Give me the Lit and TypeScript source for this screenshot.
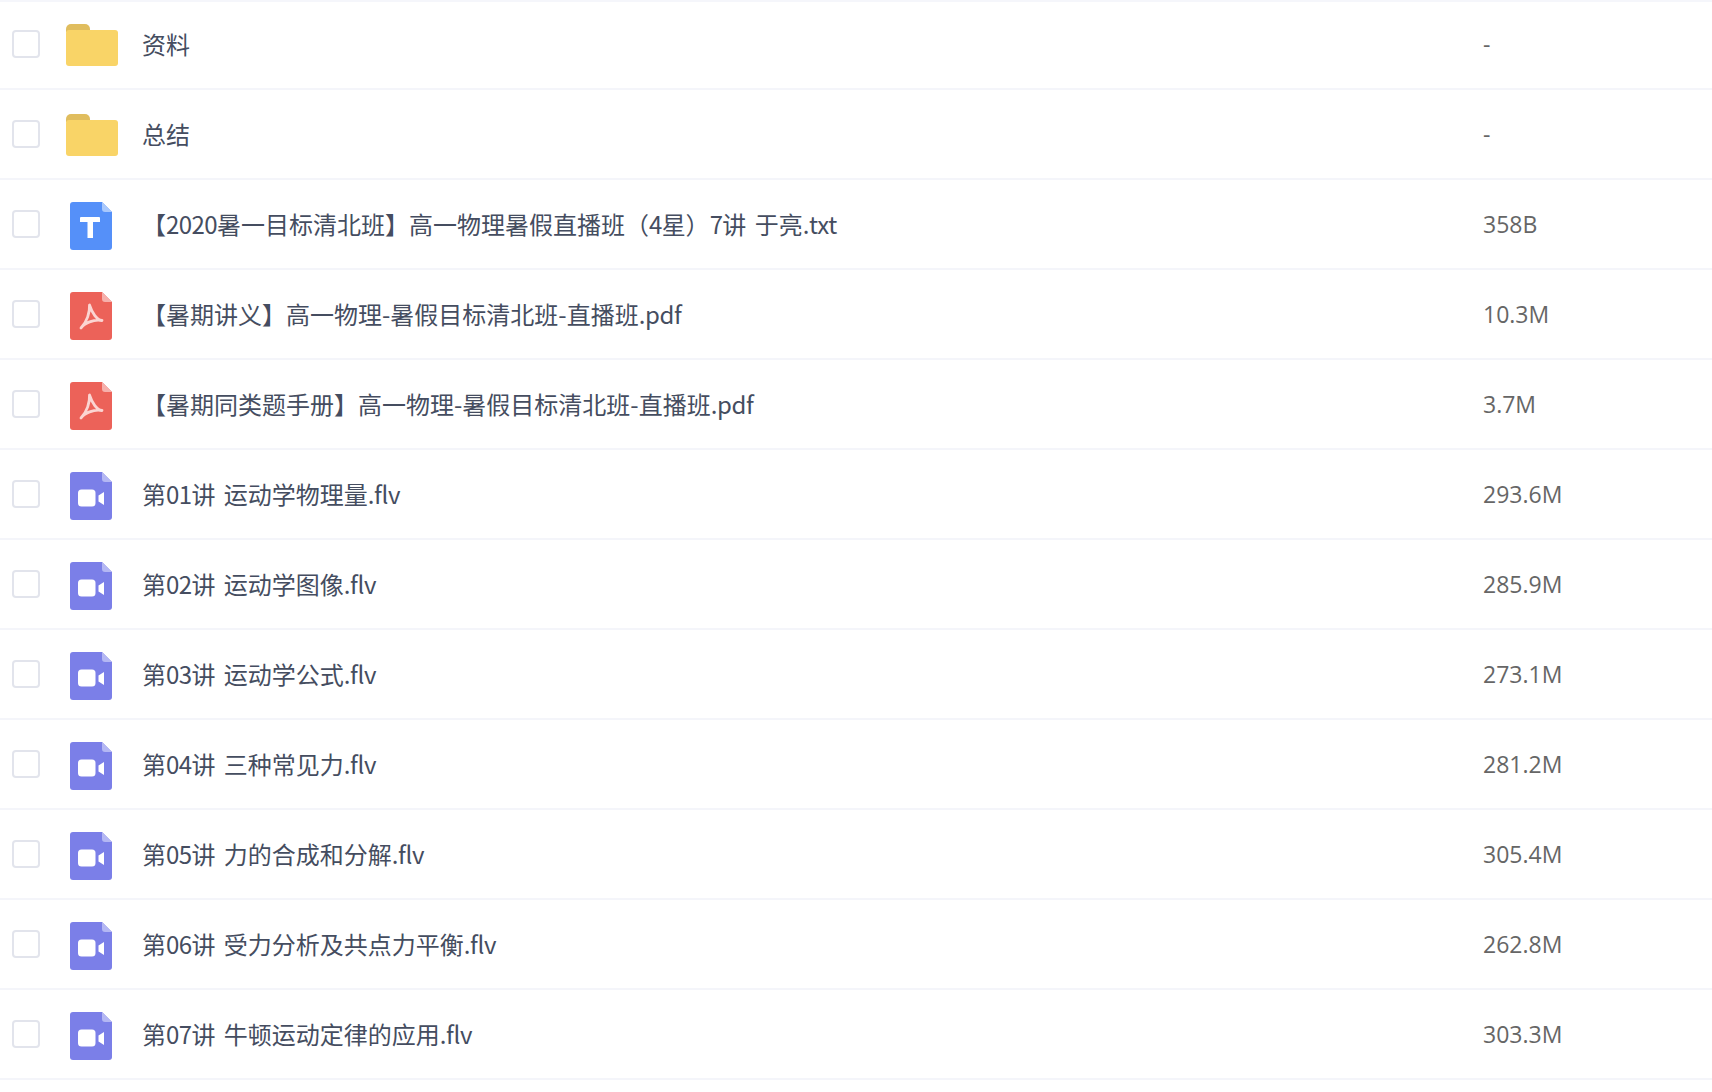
import { LitElement, html, css, svg } from "lit";
import { customElement } from "lit/decorators.js";

type Kind = "folder" | "txt" | "pdf" | "video";
const rows: [Kind, string, string][] = [
  ["folder", "资料", "-"],
  ["folder", "总结", "-"],
  ["txt", "【2020暑一目标清北班】高一物理暑假直播班（4星）7讲 于亮.txt", "358B"],
  ["pdf", "【暑期讲义】高一物理-暑假目标清北班-直播班.pdf", "10.3M"],
  ["pdf", "【暑期同类题手册】高一物理-暑假目标清北班-直播班.pdf", "3.7M"],
  ["video", "第01讲 运动学物理量.flv", "293.6M"],
  ["video", "第02讲 运动学图像.flv", "285.9M"],
  ["video", "第03讲 运动学公式.flv", "273.1M"],
  ["video", "第04讲 三种常见力.flv", "281.2M"],
  ["video", "第05讲 力的合成和分解.flv", "305.4M"],
  ["video", "第06讲 受力分析及共点力平衡.flv", "262.8M"],
  ["video", "第07讲 牛顿运动定律的应用.flv", "303.3M"],
];

const doc = (fill: string, fold: string, inner: unknown) => html`<svg class="doc" viewBox="0 0 42 48" width="42" height="48">
  <path d="M3 0H32L42 10V45a3 3 0 0 1-3 3H3a3 3 0 0 1-3-3V3a3 3 0 0 1 3-3Z" fill="${fill}"/>
  <path d="M32 0L42 10H35a3 3 0 0 1-3-3Z" fill="${fold}"/>
  ${inner}
</svg>`;

const icons = {
  folder: html`<svg class="folder" viewBox="0 0 52 42" width="52" height="42">
    <path d="M0 5a5 5 0 0 1 5-5H19a5 5 0 0 1 5 5v3H0Z" fill="#e0bd5e"/>
    <path d="M0 9a3 3 0 0 1 3-3H49a3 3 0 0 1 3 3V39a3 3 0 0 1-3 3H3a3 3 0 0 1-3-3Z" fill="#f9d467"/>
  </svg>`,
  txt: doc("#5590f9", "#a9c8fc", svg`<path d="M10 16a1 1 0 0 1 1-1H29a1 1 0 0 1 1 1V20H23V36H17.5V20H10Z" fill="#fff"/>`),
  pdf: doc("#ec6259", "#f6b0ac", svg`<path d="M19.5 13C20 20 17 30 11 36C14 31 24 27 32 28.5C27 28 22 21 19.5 13Z" fill="none" stroke="#fbd5d2" stroke-width="2.8" stroke-linejoin="round"/>`),
  video: doc("#7b7fe8", "#b4b7f3", svg`<rect x="8" y="17.5" width="17.5" height="17" rx="3.5" fill="#fff"/><path d="M28.5 23.5L34 20V33L28.5 29.5Z" fill="#fff"/>`),
};

const parts = (text: string) =>
  text.split(/([0-9]+|[a-zA-Z.]+)/).map((p) =>
    /^[0-9]+$/.test(p)
      ? html`<span class="num">${p}</span>`
      : /^[a-zA-Z.]+$/.test(p)
        ? html`<span class="lat">${p}</span>`
        : p,
  );

@customElement("app-root")
export class AppRoot extends LitElement {
  static styles = css`
    :host {
      display: block;
      width: 1712px;
      height: 1092px;
      background: #fff;
      overflow: hidden;
      font-family: "Noto Sans CJK SC", "Noto Sans", sans-serif;
    }
    .row {
      display: flex;
      align-items: center;
      height: 90px;
      box-sizing: border-box;
      border-bottom: 2px solid #f4f5fa;
    }
    .row:first-child { box-shadow: inset 0 2px 0 #f5f6fb; }
    .check {
      flex: none;
      width: 28px;
      height: 28px;
      box-sizing: border-box;
      margin-left: 12px;
      border: 2px solid #e2e4ec;
      border-radius: 4px;
      background: #fff;
    }
    .icon {
      flex: none;
      width: 52px;
      margin-left: 26px;
      display: flex;
      justify-content: center;
      align-items: center;
    }
    .folder { margin-top: 2px; }
    .doc { margin: 4px 2px 0 0; }
    .name {
      flex: none;
      width: 1341px;
      margin-left: 24px;
      font-size: 24px;
      line-height: 32px;
      color: #454d60;
      white-space: nowrap;
      word-spacing: 3px;
    }
    .num { letter-spacing: -0.6px; }
    .lat { letter-spacing: -0.4px; }
    .size {
      font-family: "Open Sans", "Noto Sans", sans-serif;
      font-size: 23px;
      line-height: 32px;
      color: #666;
    }
  `;
  render() {
    return rows.map(([k, n, s]) => html`<div class="row">
      <div class="check"></div>
      <div class="icon">${icons[k]}</div>
      <div class="name">${parts(n)}</div>
      <div class="size">${s}</div>
    </div>`);
  }
}
